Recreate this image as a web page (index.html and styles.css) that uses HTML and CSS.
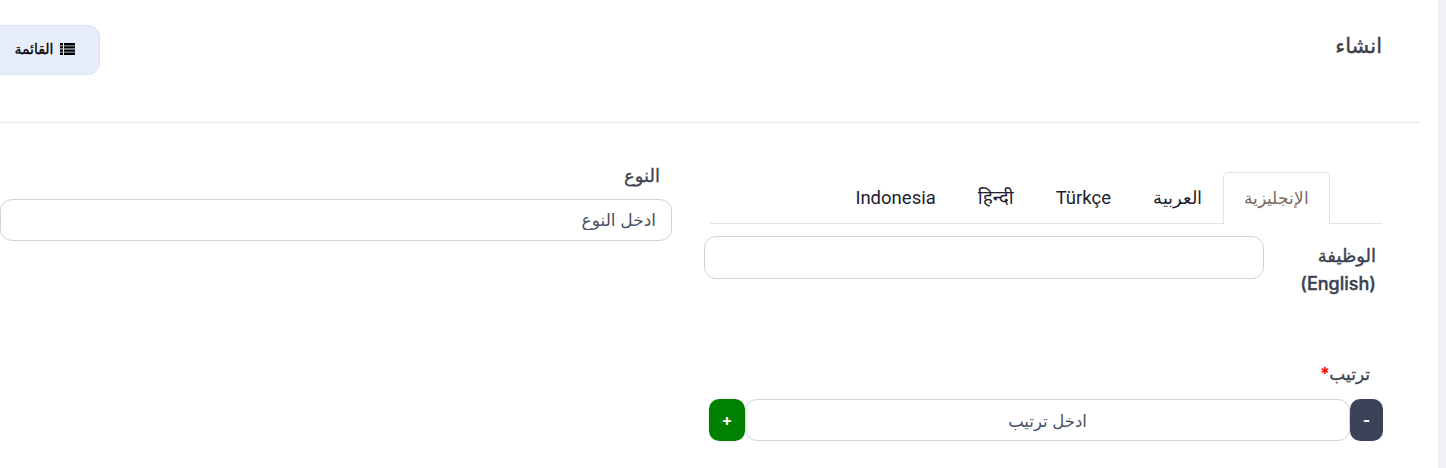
FILE: index.html
```html
<!DOCTYPE html>
<html lang="ar" dir="rtl">
<head>
<meta charset="utf-8">
<title>انشاء</title>
<link rel="stylesheet" href="styles.css">
</head>
<body>
<main class="card">
  <div class="inner">
    <header class="head">
      <h1 class="title">انشاء</h1>
      <a class="list-btn" href="#">
        <svg class="list-icon" viewBox="0 0 15 12" aria-hidden="true">
          <path d="M0 0h3v2.4H0zM4 0h11v2.4H4zM0 3.2h3v2.4H0zM4 3.2h11v2.4H4zM0 6.4h3v2.4H0zM4 6.4h11v2.4H4zM0 9.6h3V12H0zM4 9.6h11V12H4z"/>
        </svg>
        <span>القائمة</span>
      </a>
    </header>
    <div class="form">
      <section class="col-main">
        <ul class="tabs">
          <li class="tab tab-ar active">الإنجليزية</li>
          <li class="tab tab-ar">العربية</li>
          <li class="tab">Türkçe</li>
          <li class="tab tab-hi">हिन्दी</li>
          <li class="tab">Indonesia</li>
        </ul>
        <div class="job-row">
          <label class="job-label">الوظيفة (English)</label>
          <input class="field job-input" type="text">
        </div>
        <label class="order-label">ترتيب<span class="req">*</span></label>
        <div class="stepper">
          <button class="step minus" type="button">-</button>
          <input class="field order-input" type="text" placeholder="ادخل ترتيب">
          <button class="step plus" type="button">+</button>
        </div>
      </section>
      <section class="col-side">
        <label class="type-label">النوع</label>
        <input class="field type-input" type="text" placeholder="ادخل النوع">
      </section>
    </div>
  </div>
</main>
</body>
</html>
```

FILE: styles.css
```css
* { box-sizing: border-box; }
html, body { height: 100%; }
body {
  margin: 0;
  background: #eff1f6;
  overflow: hidden;
  font-family: Inter, "DejaVu Sans", sans-serif;
  color: #3a4252;
}
.card {
  width: 1438px;
  height: 468px;
  margin-right: 8px;
  background: #fff;
  padding-right: 18px;
}
.inner { width: 1420px; }
.head {
  height: 123px;
  display: flex;
  align-items: flex-start;
  justify-content: space-between;
  padding-right: 38px;
  border-bottom: 1px solid #e9e9ec;
}
.title {
  margin: 32px 0 0;
  font-size: 21px;
  line-height: 28px;
  font-weight: 500;
  color: #3a3f4a;
  -webkit-text-stroke: 0.4px #3a3f4a;
}
.list-btn {
  width: 111px;
  height: 50px;
  margin-top: 25px;
  margin-left: -11px;
  padding-bottom: 3px;
  display: flex;
  align-items: center;
  justify-content: center;
  gap: 6px;
  background: #e8edfc;
  border: 1px solid #d8e2fa;
  border-radius: 12px;
  color: #000;
  font-size: 14px;
  font-weight: 500;
  -webkit-text-stroke: 0.3px #000;
  text-decoration: none;
}
.list-icon { width: 15px; height: 12px; fill: #000; flex: none; }
.form {
  display: grid;
  grid-template-columns: 678px 672px;
  column-gap: 32px;
  padding-right: 38px;
}
.col-main { padding-top: 49px; }
.tabs {
  display: flex;
  list-style: none;
  margin: 0 0 12px 0;
  padding: 0 52px 0 0;
  height: 52px;
  width: 672px;
  border-bottom: 1px solid #e3e4e8;
  font-family: Roboto, "Noto Sans", sans-serif;
  font-size: 18.5px;
  color: #1d2230;
}
.tab {
  height: 52px;
  padding: 0 20px 2px;
  border: 1px solid transparent;
  border-bottom: 0;
  display: flex;
  align-items: center;
}
.tab-ar { font-size: 17.5px; }
.tab-hi { font-size: 19px; padding-bottom: 4px; }
.tab.active {
  font-size: 16.8px;
  color: #7b6a5f;
  background: #fff;
  border-color: #e3e4e8;
  border-radius: 5px 5px 0 0;
}
.field {
  display: block;
  height: 42px;
  border: 1px solid #d2d2de;
  border-radius: 12px;
  background: #fff;
  font-family: inherit;
  font-size: 17px;
  color: #3a4252;
  outline: none;
  padding: 0 15px;
}
.field::placeholder { color: #4a5160; opacity: 1; }
.job-row { display: flex; align-items: flex-start; margin-right: 6px; }
.job-label {
  width: 112px;
  flex: none;
  padding-top: 6px;
  font-size: 18px;
  line-height: 28px;
  font-weight: 500;
  -webkit-text-stroke: 0.4px #3a4252;
}
.job-input { width: 560px; height: 43px; }
.order-label {
  display: block;
  margin: 64px 12px 13px 0;
  font-size: 17px;
  line-height: 24px;
  font-weight: 500;
  -webkit-text-stroke: 0.3px #3a4252;
}
.req { color: #f00; -webkit-text-stroke: 0.3px #f00; }
.stepper { display: flex; width: 674px; margin-right: -1px; height: 42px; }
.step {
  flex: none;
  height: 42px;
  border: 0;
  border-radius: 10px;
  color: #fff;
  font-family: inherit;
  font-size: 16px;
  font-weight: 700;
  padding: 0;
}
.minus { width: 33px; background: #3a4358; }
.plus { width: 36px; background: #008000; }
.order-input { flex: 1; min-width: 0; text-align: center; font-size: 16.5px; padding-top: 2px; }
.col-side { padding-top: 40px; }
.type-label {
  display: block;
  margin: 0 12px 10px 0;
  font-size: 18px;
  line-height: 26px;
  font-weight: 500;
  -webkit-text-stroke: 0.3px #3a4252;
}
.type-input { width: 672px; }
```
